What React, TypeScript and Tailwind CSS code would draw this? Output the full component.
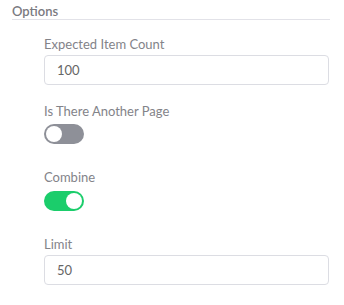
import { useState } from "react";

function Toggle({ on, onChange }: { on: boolean; onChange: () => void }) {
  return (
    <button
      type="button"
      onClick={onChange}
      className={`relative flex h-[20px] w-[40px] items-center rounded-full px-[2px] ${
        on ? "justify-end bg-[#1bcd6b]" : "justify-start bg-[#8e9098]"
      }`}
    >
      <span className="h-[16px] w-[16px] rounded-full bg-white" />
    </button>
  );
}

function TextField({ label, value }: { label: string; value: string }) {
  return (
    <div className="flex flex-col">
      <label className="text-[13px] leading-[18px] text-[#838389]">{label}</label>
      <input
        defaultValue={value}
        className="mt-[2px] h-[30px] w-[285px] rounded-[4px] border border-[#dcdde3] bg-white px-[12px] text-[13px] text-[#666] outline-none"
      />
    </div>
  );
}

export default function App() {
  const [another, setAnother] = useState(false);
  const [combine, setCombine] = useState(true);

  return (
    <div
      className="h-[305px] w-[344px] bg-white pl-[12px] pr-[14px]"
      style={{ fontFamily: "Lato, 'Open Sans', sans-serif" }}
    >
      {/* Section header */}
      <div className="border-b border-[#e2e2e8] pt-[3px] text-[13px] font-semibold leading-[16px] text-[#7a7a7f]">
        Options
      </div>

      <div className="flex flex-col pl-[32px]">
        <div className="mt-[15px]">
          <TextField label="Expected Item Count" value="100" />
        </div>

        <div className="mt-[17px] flex flex-col">
          <span className="text-[13px] leading-[18px] text-[#838389]">Is There Another Page</span>
          <div className="mt-[4px]">
            <Toggle on={another} onChange={() => setAnother(!another)} />
          </div>
        </div>

        <div className="mt-[24px] flex flex-col">
          <span className="text-[13px] leading-[18px] text-[#838389]">Combine</span>
          <div className="mt-[5px]">
            <Toggle on={combine} onChange={() => setCombine(!combine)} />
          </div>
        </div>

        <div className="mt-[24px]">
          <TextField label="Limit" value="50" />
        </div>
      </div>
    </div>
  );
}
